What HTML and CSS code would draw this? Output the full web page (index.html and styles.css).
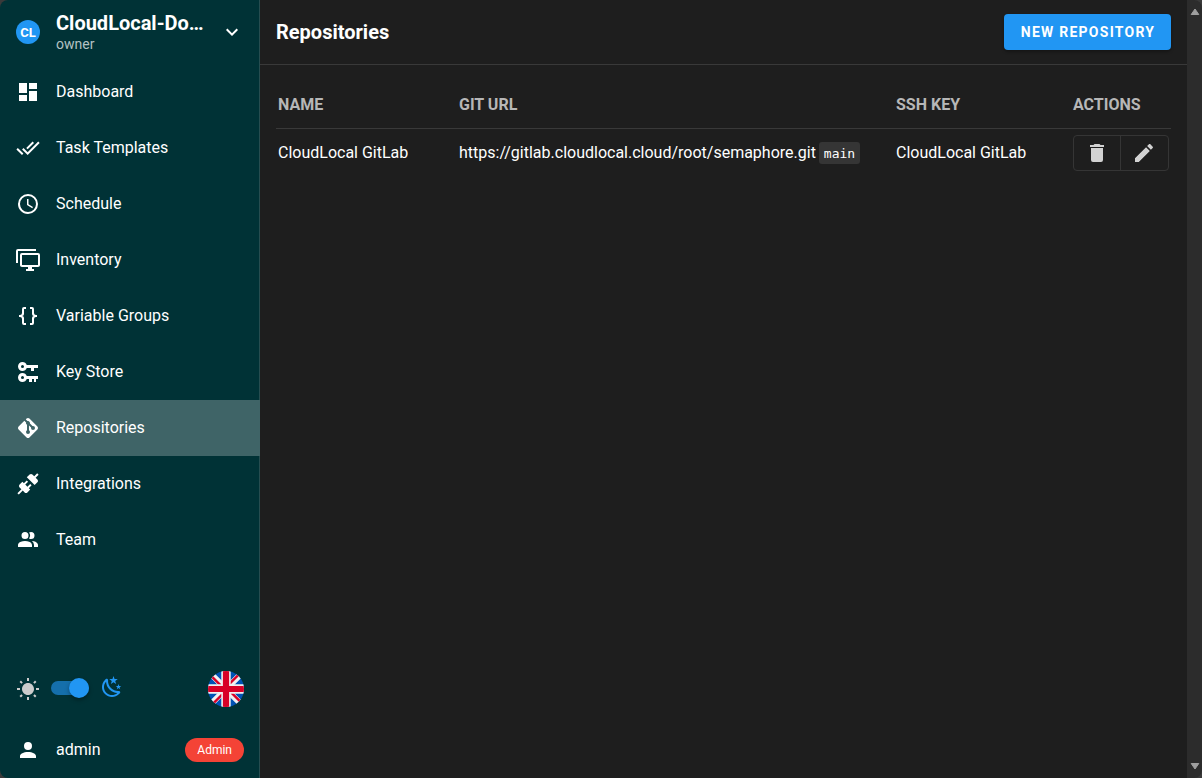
FILE: index.html
```html
<!DOCTYPE html>
<html lang="en">
<head>
  <meta charset="UTF-8">
  <meta name="viewport" content="width=device-width, initial-scale=1.0">
  <title>Repositories</title>
  <link rel="stylesheet" href="styles.css">
</head>
<body>
  <div class="app">
    <nav class="sidebar">
      <div class="project">
        <div class="avatar">CL</div>
        <div class="project-info">
          <div class="project-name">CloudLocal-Do…</div>
          <div class="project-role">owner</div>
        </div>
        <svg class="icon" viewBox="0 0 24 24"><path d="M7.41,8.58L12,13.17L16.59,8.58L18,10L12,16L6,10L7.41,8.58Z"/></svg>
      </div>

      <a class="nav-item">
        <svg class="icon" viewBox="0 0 24 24"><path d="M13,3V9H21V3M13,21H21V11H13M3,21H11V15H3M3,13H11V3H3V13Z"/></svg>
        <span>Dashboard</span>
      </a>
      <a class="nav-item">
        <svg class="icon" viewBox="0 0 24 24"><path d="M0.41,13.41L6,19L7.41,17.58L1.83,12M22.24,5.58L11.66,16.17L7.5,12L6.07,13.41L11.66,19L23.66,7M18,7L16.59,5.58L10.24,11.93L11.66,13.34L18,7Z"/></svg>
        <span>Task Templates</span>
      </a>
      <a class="nav-item">
        <svg class="icon" viewBox="0 0 24 24"><path d="M12,20A8,8 0 0,0 20,12A8,8 0 0,0 12,4A8,8 0 0,0 4,12A8,8 0 0,0 12,20M12,2A10,10 0 0,1 22,12A10,10 0 0,1 12,22C6.47,22 2,17.5 2,12A10,10 0 0,1 12,2M12.5,7V12.25L17,14.92L16.25,16.15L11,13V7H12.5Z"/></svg>
        <span>Schedule</span>
      </a>
      <a class="nav-item">
        <svg class="icon" viewBox="0 0 24 24"><path d="M22,17V7H6V17H22M22,5A2,2 0 0,1 24,7V17C24,18.11 23.1,19 22,19H16V21H18V23H10V21H12V19H6C4.89,19 4,18.11 4,17V7A2,2 0 0,1 6,5H22M2,3V15H0V3A2,2 0 0,1 2,1H20V3H2Z"/></svg>
        <span>Inventory</span>
      </a>
      <a class="nav-item">
        <svg class="icon" viewBox="0 0 24 24"><path d="M8,3A2,2 0 0,0 6,5V9A2,2 0 0,1 4,11H3V13H4A2,2 0 0,1 6,15V19A2,2 0 0,0 8,21H10V19H8V14A2,2 0 0,0 6,12A2,2 0 0,0 8,10V5H10V3M16,3A2,2 0 0,1 18,5V9A2,2 0 0,0 20,11H21V13H20A2,2 0 0,0 18,15V19A2,2 0 0,1 16,21H14V19H16V14A2,2 0 0,1 18,12A2,2 0 0,1 16,10V5H14V3H16Z"/></svg>
        <span>Variable Groups</span>
      </a>
      <a class="nav-item">
        <svg class="icon" viewBox="0 0 24 24"><path d="M6.5,2C8.46,2 10.13,3.25 10.74,5H22V8H18V11H15V8H10.74C10.13,9.75 8.46,11 6.5,11C4,11 2,9 2,6.5C2,4 4,2 6.5,2M6.5,5A1.5,1.5 0 0,0 5,6.5A1.5,1.5 0 0,0 6.5,8A1.5,1.5 0 0,0 8,6.5A1.5,1.5 0 0,0 6.5,5M6.5,13C8.46,13 10.13,14.25 10.74,16H22V19H20V22H18V19H16V22H13V19H10.74C10.13,20.75 8.46,22 6.5,22C4,22 2,20 2,17.5C2,15 4,13 6.5,13M6.5,16A1.5,1.5 0 0,0 5,17.5A1.5,1.5 0 0,0 6.5,19A1.5,1.5 0 0,0 8,17.5A1.5,1.5 0 0,0 6.5,16Z"/></svg>
        <span>Key Store</span>
      </a>
      <a class="nav-item active">
        <svg class="icon" viewBox="0 0 24 24"><path d="M2.6,10.59L8.38,4.8L10.07,6.5C9.83,7.35 10.22,8.28 11,8.73V14.27C10.4,14.61 10,15.26 10,16A2,2 0 0,0 12,18A2,2 0 0,0 14,16C14,15.26 13.6,14.61 13,14.27V9.41L15.07,11.5C15,11.65 15,11.82 15,12A2,2 0 0,0 17,14A2,2 0 0,0 19,12A2,2 0 0,0 17,10C16.82,10 16.65,10 16.5,10.07L13.93,7.5C14.19,6.57 13.71,5.55 12.78,5.16C12.35,5 11.9,4.96 11.5,5.07L9.8,3.38L10.59,2.6C11.37,1.81 12.63,1.81 13.41,2.6L21.4,10.59C22.19,11.37 22.19,12.63 21.4,13.41L13.41,21.4C12.63,22.19 11.37,22.19 10.59,21.4L2.6,13.41C1.81,12.63 1.81,11.37 2.6,10.59Z"/></svg>
        <span>Repositories</span>
      </a>
      <a class="nav-item">
        <svg class="icon" viewBox="0 0 24 24"><path d="M21.4 7.5C22.2 8.3 22.2 9.6 21.4 10.3L18.6 13.1L10.8 5.3L13.6 2.5C14.4 1.7 15.7 1.7 16.4 2.5L18.2 4.3L21.2 1.3L22.6 2.7L19.6 5.7L21.4 7.5M15.6 13.3L14.2 11.9L11.4 14.7L9.3 12.6L12.1 9.8L10.7 8.4L7.9 11.2L6.4 9.8L3.6 12.6C2.8 13.4 2.8 14.7 3.6 15.4L5.4 17.2L1.4 21.2L2.8 22.6L6.8 18.6L8.6 20.4C9.4 21.2 10.7 21.2 11.4 20.4L14.2 17.6L12.8 16.2L15.6 13.3Z"/></svg>
        <span>Integrations</span>
      </a>
      <a class="nav-item">
        <svg class="icon" viewBox="0 0 24 24"><path d="M16 17V19H2V17S2 13 9 13 16 17 16 17M12.5 7.5A3.5 3.5 0 1 0 9 11A3.5 3.5 0 0 0 12.5 7.5M15.94 13A5.32 5.32 0 0 1 18 17V19H22V17S22 13.37 15.94 13M15 4A3.39 3.39 0 0 0 13.07 4.59A5 5 0 0 1 13.07 10.41A3.39 3.39 0 0 0 15 11A3.5 3.5 0 0 0 15 4Z"/></svg>
        <span>Team</span>
      </a>

      <div class="theme-row">
        <svg class="icon sun" viewBox="0 0 24 24"><path d="M3.55 19.09L4.96 20.5L6.76 18.71L5.34 17.29M12 6C8.69 6 6 8.69 6 12S8.69 18 12 18 18 15.31 18 12C18 8.68 15.31 6 12 6M20 13H23V11H20M17.24 18.71L19.04 20.5L20.45 19.09L18.66 17.29M20.45 5L19.04 3.6L17.24 5.39L18.66 6.81M13 1H11V4H13M6.76 5.39L4.96 3.6L3.55 5L5.34 6.81L6.76 5.39M1 13H4V11H1M13 20H11V23H13"/></svg>
        <div class="switch"><div class="thumb"></div></div>
        <svg class="icon moon" viewBox="0 0 24 24"><path d="M17.75,4.09L15.22,6.03L16.13,9.09L13.5,7.28L10.87,9.09L11.78,6.03L9.25,4.09L12.44,4L13.5,1L14.56,4L17.75,4.09M21.25,11L19.61,12.25L20.2,14.23L18.5,13.06L16.8,14.23L17.39,12.25L15.75,11L17.81,10.95L18.5,9L19.19,10.95L21.25,11M18.97,15.95C19.8,15.87 20.69,17.05 20.16,17.8C19.84,18.25 19.5,18.67 19.08,19.07C15.17,23 8.84,23 4.94,19.07C1.03,15.17 1.03,8.83 4.94,4.93C5.34,4.53 5.76,4.17 6.21,3.85C6.96,3.32 8.14,4.21 8.06,5.04C7.79,7.9 8.75,10.87 10.95,13.06C13.14,15.26 16.1,16.22 18.97,15.95M17.33,17.97C14.5,17.81 11.7,16.64 9.53,14.5C7.36,12.31 6.2,9.5 6.04,6.68C3.23,9.82 3.34,14.64 6.35,17.66C9.37,20.67 14.19,20.78 17.33,17.97Z"/></svg>
        <svg class="flag" viewBox="0 0 512 512">
          <rect width="512" height="512" fill="#0052b4"/>
          <path d="M0 0L512 512M512 0L0 512" stroke="#f0f0f0" stroke-width="84"/>
          <path d="M-12 12L244 268M268 244L524 500M500 -12L244 244M268 268L12 524" stroke="#d80027" stroke-width="34"/>
          <path d="M256 0V512M0 256H512" stroke="#f0f0f0" stroke-width="134"/>
          <path d="M256 0V512M0 256H512" stroke="#d80027" stroke-width="88"/>
        </svg>
      </div>

      <div class="user-row">
        <svg class="icon" viewBox="0 0 24 24"><path d="M12,4A4,4 0 0,1 16,8A4,4 0 0,1 12,12A4,4 0 0,1 8,8A4,4 0 0,1 12,4M12,14C16.42,14 20,15.79 20,18V20H4V18C4,15.79 7.58,14 12,14Z"/></svg>
        <span class="user-name">admin</span>
        <span class="chip">Admin</span>
      </div>
    </nav>

    <main class="content">
      <header class="toolbar">
        <h1>Repositories</h1>
        <button class="btn-primary">New Repository</button>
      </header>
      <table class="repos">
        <thead>
          <tr>
            <th class="col-name">Name</th>
            <th class="col-url">Git URL</th>
            <th class="col-key">SSH Key</th>
            <th>Actions</th>
          </tr>
        </thead>
        <tbody>
          <tr>
            <td>CloudLocal GitLab</td>
            <td>https://gitlab.cloudlocal.cloud/root/semaphore.git <code>main</code></td>
            <td>CloudLocal GitLab</td>
            <td>
              <div class="btn-group">
                <button><svg class="icon" viewBox="0 0 24 24"><path d="M19,4H15.5L14.5,3H9.5L8.5,4H5V6H19M6,19A2,2 0 0,0 8,21H16A2,2 0 0,0 18,19V7H6V19Z"/></svg></button>
                <button><svg class="icon" viewBox="0 0 24 24"><path d="M20.71,7.04C21.1,6.65 21.1,6 20.71,5.63L18.37,3.29C18,2.9 17.35,2.9 16.96,3.29L15.12,5.12L18.87,8.87M3,17.25V21H6.75L17.81,9.93L14.06,6.18L3,17.25Z"/></svg></button>
              </div>
            </td>
          </tr>
        </tbody>
      </table>
    </main>

    <div class="scrollbar">
      <svg viewBox="0 0 10 8"><path d="M5 1L8.8 6.5H1.2Z"/></svg>
      <svg viewBox="0 0 10 8"><path d="M5 7L8.8 1.5H1.2Z"/></svg>
    </div>
  </div>
</body>
</html>
```
FILE: styles.css
```css
:root {
  --sidebar-bg: #003236;
  --main-bg: #1e1e1e;
  --primary: #2196f3;
  --divider: #393939;
}

* {
  box-sizing: border-box;
}

body {
  margin: 0;
  height: 100vh;
  background: #3a3a3a;
  color: #fff;
  font-family: Roboto, sans-serif;
  font-size: 16px;
  line-height: 24px;
}

.app {
  display: flex;
  height: 100vh;
  border-radius: 8px;
  overflow: hidden;
}

.icon {
  width: 24px;
  height: 24px;
  fill: currentColor;
  flex-shrink: 0;
  display: block;
}

/* sidebar */
.sidebar {
  display: flex;
  flex-direction: column;
  width: 260px;
  flex-shrink: 0;
  background: var(--sidebar-bg);
  border-right: 1px solid #264d50;
}

.project {
  display: flex;
  align-items: center;
  height: 64px;
  padding: 0 15px 0 16px;
}

.avatar {
  width: 24px;
  height: 24px;
  border-radius: 50%;
  background: var(--primary);
  font-size: 13px;
  line-height: 25px;
  font-weight: bold;
  text-align: center;
}

.project-info {
  width: 148px;
  margin: 0 16px;
  padding-top: 2px;
}

.project-name {
  font-size: 20px;
  line-height: 23px;
  font-weight: bold;
  overflow: hidden;
  white-space: nowrap;
  text-overflow: ellipsis;
}

.project-role {
  font-size: 14px;
  line-height: 19px;
  color: #b3c2c3;
}

.nav-item {
  display: flex;
  align-items: center;
  gap: 16px;
  height: 56px;
  margin-right: -1px;
  padding: 0 16px;
}

.nav-item.active {
  background: #3f6467;
}

.theme-row {
  display: flex;
  align-items: center;
  height: 66px;
  margin-top: auto;
  padding: 0 15px 0 16px;
}

.sun {
  color: #ccc;
}

.switch {
  width: 38px;
  height: 14px;
  margin: 0 11px 2px;
  border-radius: 7px;
  background: #156fab;
  display: flex;
  align-items: center;
  justify-content: flex-end;
}

.thumb {
  width: 20px;
  height: 20px;
  border-radius: 50%;
  background: var(--primary);
  box-shadow: 0 2px 4px rgba(0, 0, 0, 0.35);
}

.moon {
  color: var(--primary);
  margin-bottom: 4px;
}

.flag {
  width: 36px;
  height: 36px;
  margin-left: auto;
  border-radius: 50%;
}

.user-row {
  display: flex;
  align-items: center;
  gap: 16px;
  height: 56px;
  padding: 0 15px 0 16px;
}

.chip {
  margin-left: auto;
  padding: 0 12px;
  border-radius: 12px;
  background: #f44336;
  font-size: 12px;
}

/* content */
.content {
  flex: 1;
  background: var(--main-bg);
}

.toolbar {
  display: flex;
  align-items: center;
  justify-content: space-between;
  height: 65px;
  padding: 0 16px;
  border-bottom: 1px solid var(--divider);
}

h1 {
  margin: 0;
  font-size: 20px;
  font-weight: bold;
}

.btn-primary {
  height: 36px;
  width: 167px;
  padding: 0 0 0 1px;
  border: none;
  border-radius: 4px;
  background: var(--primary);
  color: #fff;
  font-family: inherit;
  font-size: 14px;
  font-weight: bold;
  letter-spacing: 1.25px;
  text-transform: uppercase;
  box-shadow: 0 2px 3px rgba(0, 0, 0, 0.3);
}

.repos {
  width: 895px;
  margin: 15px 16px 0;
  border-collapse: separate;
  border-spacing: 0;
  table-layout: fixed;
}

.repos th,
.repos td {
  height: 48px;
  padding: 0 2px;
  text-align: left;
  white-space: nowrap;
}

.repos th {
  height: 49px;
  padding-top: 2px;
  border-bottom: 1px solid var(--divider);
  color: #b7b7b7;
  font-weight: bold;
  text-transform: uppercase;
}

.col-name {
  width: 181px;
}

.col-url {
  width: 437px;
}

.col-key {
  width: 177px;
}

code {
  margin-left: -1px;
  padding: 4px 5px 3px;
  border-radius: 3px;
  background: #353535;
  font-family: "DejaVu Sans Mono", monospace;
  font-size: 13px;
}

.btn-group {
  display: flex;
  width: 96px;
  height: 36px;
  border: 1px solid #353535;
  border-radius: 4px;
}

.btn-group button {
  width: 46px;
  display: flex;
  align-items: center;
  justify-content: center;
  padding: 0;
  border: none;
  background: none;
  color: #d2d2d2;
}

.btn-group button + button {
  width: 48px;
  padding-right: 1px;
  border-left: 1px solid #353535;
}

/* scrollbar track */
.scrollbar {
  display: flex;
  flex-direction: column;
  align-items: center;
  justify-content: space-between;
  width: 15px;
  padding: 8px 0;
  background: #2c2c2c;
}

.scrollbar svg {
  width: 10px;
  height: 8px;
  fill: #9f9f9f;
  stroke: #9f9f9f;
  stroke-linejoin: round;
}
```
